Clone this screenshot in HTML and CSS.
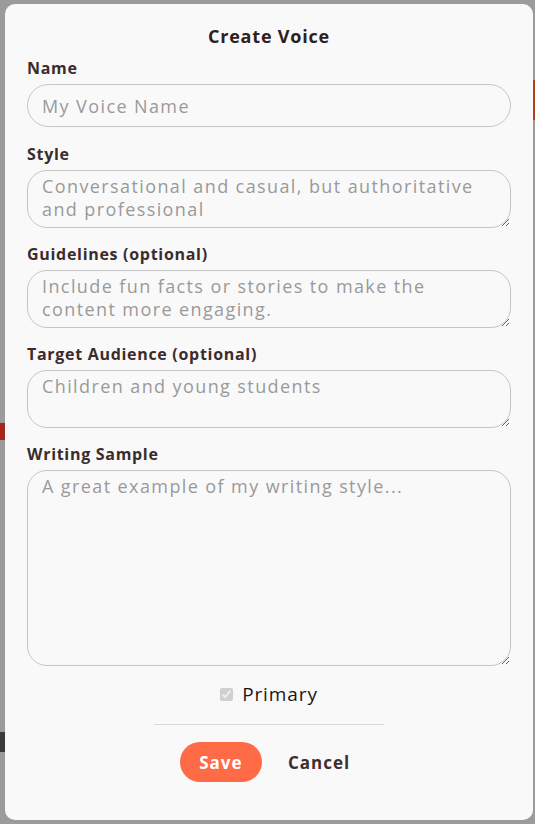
FILE: index.html
```html
<!DOCTYPE html>
<html lang="en">
<head>
    <meta charset="UTF-8">
    <meta name="viewport" content="width=device-width, initial-scale=1.0">
    <title>Create Voice</title>
    <link rel="stylesheet" href="styles.css">
</head>
<body>
    <div class="backdrop">
        <div class="bg-bit bit-orange"></div>
        <div class="bg-bit bit-red"></div>
        <div class="bg-bit bit-dark"></div>

        <div class="modal">
            <h2 class="modal-title">Create Voice</h2>

            <div class="field field-name">
                <label for="name">Name</label>
                <input type="text" id="name" class="pill-input" placeholder="My Voice Name">
            </div>

            <div class="field">
                <label for="style">Style</label>
                <textarea id="style" class="area" placeholder="Conversational and casual, but authoritative and professional"></textarea>
            </div>

            <div class="field">
                <label for="guidelines">Guidelines (optional)</label>
                <textarea id="guidelines" class="area" placeholder="Include fun facts or stories to make the content more engaging."></textarea>
            </div>

            <div class="field">
                <label for="audience">Target Audience (optional)</label>
                <textarea id="audience" class="area" placeholder="Children and young students"></textarea>
            </div>

            <div class="field">
                <label for="sample">Writing Sample</label>
                <textarea id="sample" class="area area-tall" placeholder="A great example of my writing style..."></textarea>
            </div>

            <label class="primary-row">
                <input type="checkbox" checked disabled>
                <span>Primary</span>
            </label>

            <hr class="divider">

            <div class="actions">
                <button class="save-btn">Save</button>
                <button class="cancel-btn">Cancel</button>
            </div>
        </div>
    </div>
</body>
</html>
```

FILE: styles.css
```css
body {
    margin: 0;
    padding: 0;
    font-family: "Open Sans", Arial, sans-serif;
    background-color: #9b9b9b;
}
.backdrop {
    position: relative;
    height: 824px;
    padding: 4px 2px 0 5px;
    box-sizing: border-box;
    overflow: hidden;
}
.bg-bit {
    position: absolute;
}
.bit-orange {
    right: 0;
    top: 80px;
    width: 3px;
    height: 40px;
    background-color: #b4401c;
}
.bit-red {
    left: 0;
    top: 423px;
    width: 5px;
    height: 17px;
    background-color: #a3271a;
}
.bit-dark {
    left: 0;
    top: 732px;
    width: 5px;
    height: 20px;
    background-color: #3a3a3a;
}
.modal {
    position: relative;
    height: 816px;
    box-sizing: border-box;
    background-color: #f9f9f9;
    border-radius: 10px;
    padding: 22px 22px 0 22px;
}
.modal-title {
    margin: 0 0 12px;
    text-align: center;
    font-size: 18px;
    line-height: 20px;
    font-weight: 700;
    letter-spacing: 0.8px;
    color: #2e2020;
}
.field {
    margin-bottom: 16px;
}
.field-name {
    margin-bottom: 17px;
}
.field label {
    display: block;
    font-size: 16px;
    line-height: 20px;
    font-weight: 700;
    letter-spacing: 0.7px;
    color: #3b2c2c;
    margin-bottom: 6px;
}
.pill-input,
.area {
    display: block;
    width: 100%;
    box-sizing: border-box;
    border: 1px solid #c6c6c6;
    background-color: #f9f9f9;
    font-family: inherit;
    font-size: 18px;
    letter-spacing: 1.4px;
    color: #333;
    padding: 0 14px;
    outline: none;
}
.pill-input {
    height: 43px;
    border-radius: 22px;
}
.area {
    height: 58px;
    border-radius: 20px;
    padding-top: 4px;
    line-height: 23px;
    resize: vertical;
}
.area-tall {
    height: 196px;
}
.pill-input::placeholder,
.area::placeholder {
    color: #9a9a9a;
}
.primary-row {
    display: flex;
    justify-content: center;
    align-items: center;
    gap: 9px;
    margin-top: 13px;
    font-size: 19px;
    line-height: 24px;
    letter-spacing: 0.9px;
    color: #1e1414;
}
.primary-row input {
    margin: 0;
    width: 13px;
    height: 13px;
}
.divider {
    width: 230px;
    margin: 18px auto 0;
    border: none;
    border-top: 1px solid #d9d9d9;
}
.actions {
    display: flex;
    justify-content: center;
    align-items: center;
    gap: 26px;
    margin-top: 17px;
    padding-right: 8px;
}
.save-btn {
    background-color: #ff6b47;
    color: white;
    border: none;
    width: 82px;
    height: 40px;
    border-radius: 20px;
    font-family: inherit;
    font-size: 17px;
    font-weight: 700;
    letter-spacing: 1px;
    cursor: pointer;
}
.cancel-btn {
    background: none;
    border: none;
    padding: 0;
    font-family: inherit;
    font-size: 17px;
    font-weight: 700;
    letter-spacing: 1px;
    color: #3b2f2f;
    cursor: pointer;
}
```
